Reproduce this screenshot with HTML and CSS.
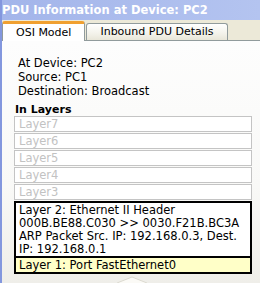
FILE: index.html
```html
<!DOCTYPE html>
<html>
<head>
<meta charset="utf-8">
<link rel="stylesheet" href="styles.css">
</head>
<body>
<div class="window">
  <div class="titlebar">PDU Information at Device: PC2</div>
  <div class="tabs">
    <div class="tab active">OSI Model</div>
    <div class="tab">Inbound PDU Details</div>
  </div>
  <div class="content">
    <div class="info">
      <div>At Device: PC2</div>
      <div>Source: PC1</div>
      <div>Destination: Broadcast</div>
    </div>
    <div class="heading">In Layers</div>
    <div class="layers">
      <div class="layer dim">Layer7</div>
      <div class="layer dim">Layer6</div>
      <div class="layer dim">Layer5</div>
      <div class="layer dim">Layer4</div>
      <div class="layer dim">Layer3</div>
      <div class="layer l2">Layer 2: Ethernet II Header<br>000B.BE88.C030 &gt;&gt; 0030.F21B.BC3A<br>ARP Packet Src. IP: 192.168.0.3, Dest.<br>IP: 192.168.0.1</div>
      <div class="layer l1">Layer 1: Port FastEthernet0</div>
    </div>
    <svg class="arrow" width="32" height="10" viewBox="0 0 32 10">
      <path d="M1 10 L1 7 L16 1 L31 7 L31 10" fill="#fbfaf6" stroke="#dcdad0" stroke-width="1"/>
    </svg>
  </div>
</div>
</body>
</html>
```
FILE: styles.css
```css
html, body {
  margin: 0;
  padding: 0;
  width: 260px;
  height: 283px;
  overflow: hidden;
  background: #f1f0ec;
}
.window {
  height: 283px;
  border-left: 2px solid #8397de;
  font-family: "DejaVu Sans", Verdana, sans-serif;
  font-size: 11.5px;
  color: #000;
  display: flex;
  flex-direction: column;
}
.titlebar {
  height: 20px;
  line-height: 20px;
  background: linear-gradient(to right, #a3b5ea, #b4c4f0);
  color: #fff;
  font-weight: bold;
  font-size: 11.5px;
  white-space: nowrap;
}
.tabs {
  height: 20px;
  background: #ece9d8;
  display: flex;
  align-items: flex-end;
  border-bottom: 1px solid #919b9c;
}
.tab {
  height: 16px;
  line-height: 16px;
  padding: 0 13px;
  border: 1px solid #919b9c;
  border-bottom: none;
  border-radius: 3px 3px 0 0;
  background: linear-gradient(to bottom, #ffffff, #f3f2ea 60%, #e8e6d8);
  font-size: 11px;
  white-space: nowrap;
  margin-left: 1px;
}
.tab.active {
  height: 17px;
  line-height: 17px;
  background: #fff;
  border-top: 3px solid #f0a030;
  margin-bottom: -1px;
  margin-left: 0;
  position: relative;
  z-index: 1;
}
.content {
  flex: 1;
  background: linear-gradient(to bottom, #fdfdfd, #f9f9f7 60%, #efeee9);
  padding: 15px 8px 0 12px;
  position: relative;
}
.info {
  padding-left: 4px;
  line-height: 14px;
}
.heading {
  font-weight: bold;
  font-size: 11px;
  margin-top: 5px;
  line-height: 13px;
  padding-left: 1px;
}
.layers {
  display: flex;
  flex-direction: column;
}
.layer {
  border: 1px solid #c4c4c4;
  background: #fff;
  padding: 0 4px;
  height: 14px;
  line-height: 14px;
  white-space: nowrap;
  margin-bottom: 1px;
}
.layer.dim {
  color: #c2c2c2;
}
.layer.l2 {
  height: auto;
  border: 2px solid #000;
  border-bottom-width: 1px;
  line-height: 13px;
  padding: 1px 3px 0 3px;
  margin-bottom: 0;
}
.layer.l1 {
  border: 2px solid #000;
  border-top-width: 1px;
  background: #ffffc8;
  padding: 0 3px;
}
.arrow {
  position: absolute;
  left: 114px;
  top: 235px;
  display: block;
}
```
